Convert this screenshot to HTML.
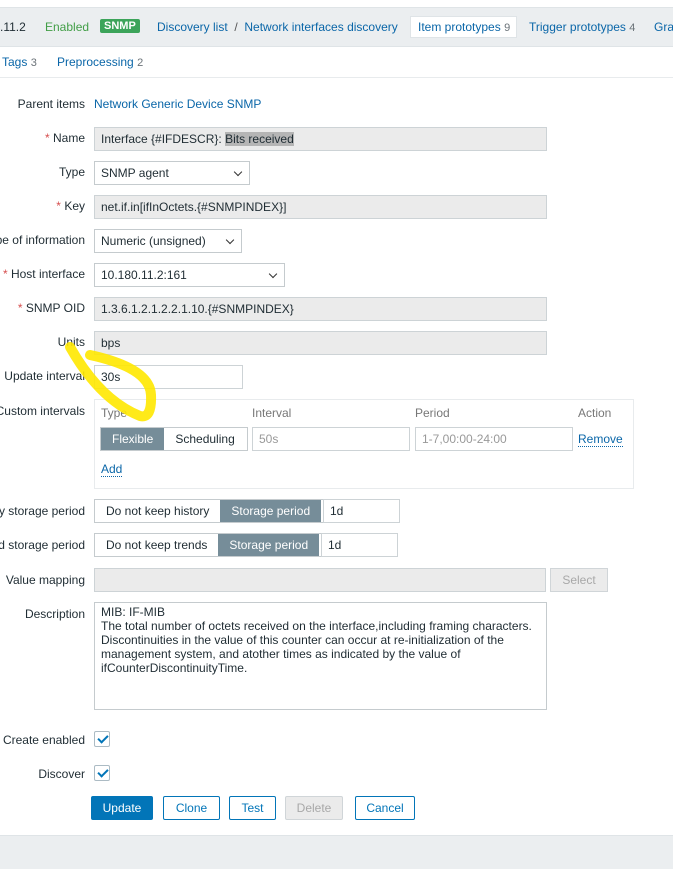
<!DOCTYPE html>
<html><head><meta charset="utf-8"><style>
*{box-sizing:border-box;margin:0;padding:0}
body{width:673px;height:869px;position:relative;overflow:hidden;background:#fff;font-family:"Liberation Sans",Arial,sans-serif;font-size:12px;color:#1f2c33}
.a{position:absolute;white-space:nowrap}
.nav{position:absolute;left:0;top:7px;width:673px;height:40px;background:#ebeef0;border-top:1px solid #dfe4e7;border-bottom:1px solid #dfe4e7}
.lnk{color:#0a66a8}
.cnt{color:#6a7278}
.lbl{position:absolute;right:588px;white-space:nowrap;text-align:right}
.req:before{content:"* ";color:#d64e4e}
.in{position:absolute;height:24px;border:1px solid #cdd3d6;background:#ebebeb;padding:4px 6px;line-height:14px;white-space:nowrap}
.w{background:#fff}
.sel{position:absolute;height:24px;border:1px solid #c5cbce;background:#fff;padding:4px 6px;line-height:14px}
.sel:after{content:"";position:absolute;right:8px;top:7px;width:5px;height:5px;border-right:1.5px solid #333;border-bottom:1.5px solid #333;transform:rotate(45deg)}
.seg{position:absolute;height:24px;border:1px solid #c5cbce;display:flex;background:#fff}
.seg div{padding:0 11px;line-height:22px}
.seg .on{background:#768d99;color:#fff}
.btn{position:absolute;height:24px;border:1px solid #0275b8;color:#0275b8;background:#fff;text-align:center;line-height:22px;border-radius:2px}
.cb{position:absolute;width:16px;height:16px;border:1px solid #acbbc4;background:#fff;border-radius:2px}
.cb:after{content:"";position:absolute;left:5px;top:1px;width:4px;height:8px;border-right:2px solid #0275b8;border-bottom:2px solid #0275b8;transform:rotate(45deg)}
</style></head><body>
<div class="nav"></div>
<div class="a" style="left:0;top:20px;color:#1f2c33">.11.2</div>
<div class="a" style="left:45px;top:20px;color:#429e47">Enabled</div>
<div class="a" style="left:100px;top:19px;background:#3ca45a;color:#fff;padding:1px 4px;font-size:11px;font-weight:bold;border-radius:2px">SNMP</div>
<div class="a lnk" style="left:157px;top:20px">Discovery list <span style="color:#555">&nbsp;/&nbsp;</span> Network interfaces discovery</div>
<div class="a" style="left:410px;top:16px;width:107px;height:22px;background:#fff;border:1px solid #dfe4e7;padding:3px 7px;line-height:14px"><span class="lnk">Item prototypes</span> <span class="cnt" style="font-size:11px">9</span></div>
<div class="a" style="left:529px;top:20px"><span class="lnk">Trigger prototypes</span> <span class="cnt" style="font-size:11px">4</span></div>
<div class="a lnk" style="left:654px;top:20px">Gra</div>
<div class="a" style="left:2px;top:55px"><span class="lnk">Tags</span> <span class="cnt" style="font-size:11px">3</span></div>
<div class="a" style="left:57px;top:55px"><span class="lnk">Preprocessing</span> <span class="cnt" style="font-size:11px">2</span></div>
<div class="a" style="left:0;top:77px;width:673px;border-top:1px solid #e8ebed"></div>

<div class="lbl" style="top:97px">Parent items</div><div class="a lnk" style="left:94px;top:97px">Network Generic Device SNMP</div>
<div class="lbl req" style="top:131px">Name</div><div class="in" style="left:94px;top:127px;width:453px">Interface {#IFDESCR}: <span style="background:#b5b5b5">Bits received</span></div>
<div class="lbl" style="top:165px">Type</div><div class="sel" style="left:94px;top:161px;width:156px">SNMP agent</div>
<div class="lbl req" style="top:199px">Key</div><div class="in" style="left:94px;top:195px;width:453px">net.if.in[ifInOctets.{#SNMPINDEX}]</div>
<div class="lbl" style="top:233px">pe of information</div><div class="sel" style="left:94px;top:229px;width:148px">Numeric (unsigned)</div>
<div class="lbl req" style="top:267px">Host interface</div><div class="sel" style="left:94px;top:263px;width:191px">10.180.11.2:161</div>
<div class="lbl req" style="top:301px">SNMP OID</div><div class="in" style="left:94px;top:297px;width:453px">1.3.6.1.2.1.2.2.1.10.{#SNMPINDEX}</div>
<div class="lbl" style="top:335px">Units</div><div class="in" style="left:94px;top:331px;width:453px">bps</div>
<div class="lbl" style="top:369px">Update interval</div><div class="in w" style="left:94px;top:365px;width:149px">30s</div>
<div class="lbl" style="top:404px">Custom intervals</div>
<div class="a" style="left:94px;top:399px;width:540px;height:90px;border:1px solid #e8ebed"></div>
<div class="a" style="left:101px;top:406px;color:#777">Type</div>
<div class="a" style="left:252px;top:406px;color:#777">Interval</div>
<div class="a" style="left:415px;top:406px;color:#777">Period</div>
<div class="a" style="left:578px;top:406px;color:#777">Action</div>
<div class="seg" style="left:100px;top:427px;width:148px"><div class="on">Flexible</div><div>Scheduling</div></div>
<div class="in w" style="left:252px;top:427px;width:158px;color:#999">50s</div>
<div class="in w" style="left:415px;top:427px;width:158px;color:#999">1-7,00:00-24:00</div>
<div class="a lnk" style="left:578px;top:432px;border-bottom:1px dotted #0a66a8">Remove</div>
<div class="a lnk" style="left:101px;top:462px;border-bottom:1px dotted #0a66a8">Add</div>
<div class="lbl" style="top:504px">y storage period</div>
<div class="seg" style="left:94px;top:499px;width:230px"><div>Do not keep history</div><div class="on">Storage period</div></div>
<div class="in w" style="left:323px;top:499px;width:77px">1d</div>
<div class="lbl" style="top:538px">d storage period</div>
<div class="seg" style="left:94px;top:533px;width:228px"><div>Do not keep trends</div><div class="on">Storage period</div></div>
<div class="in w" style="left:321px;top:533px;width:77px">1d</div>
<div class="lbl" style="top:573px">Value mapping</div>
<div class="in" style="left:94px;top:568px;width:452px;background:#ebebeb"></div>
<div class="a" style="left:550px;top:568px;width:58px;height:24px;border:1px solid #d0d5d8;background:#ebebeb;color:#a8a8a8;text-align:center;line-height:22px">Select</div>
<div class="lbl" style="top:607px">Description</div>
<div class="a" style="left:94px;top:602px;width:453px;height:108px;border:1px solid #c5cbce;padding:2px 6px;line-height:14px;white-space:normal">MIB: IF-MIB<br>The total number of octets received on the interface,including framing characters.<br>Discontinuities in the value of this counter can occur at re-initialization of the management system, and atother times as indicated by the value of ifCounterDiscontinuityTime.</div>
<div class="lbl" style="top:733px">Create enabled</div><div class="cb" style="left:94px;top:731px"></div>
<div class="lbl" style="top:767px">Discover</div><div class="cb" style="left:94px;top:765px"></div>
<div class="btn" style="left:91px;top:796px;width:62px;background:#0275b8;color:#fff">Update</div>
<div class="btn" style="left:163px;top:796px;width:57px">Clone</div>
<div class="btn" style="left:229px;top:796px;width:47px">Test</div>
<div class="btn" style="left:285px;top:796px;width:58px;border-color:#d0d5d8;background:#ebebeb;color:#a8a8a8">Delete</div>
<div class="btn" style="left:355px;top:796px;width:60px">Cancel</div>
<div class="a" style="left:0;top:835px;width:673px;height:34px;background:#ebeef0;border-top:1px solid #dfe4e7"></div>
<svg class="a" style="left:0;top:0" width="673" height="869"><path d="M70 347 Q100 400 140 416 Q152 419 151 395 Q150 368 90 355" fill="none" stroke="#ffe800" stroke-width="10" stroke-linecap="round" opacity="0.9"/></svg>
</body></html>
